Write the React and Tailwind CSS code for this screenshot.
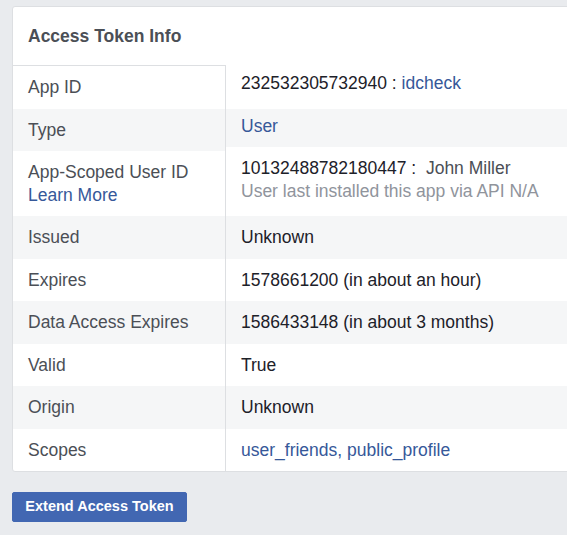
import React from 'react';

const rows = [
    { label: 'App ID', shift: true, value: (<>232532305732940 : <a className="text-[#365899]">idcheck</a></>) },
    { label: 'Type', shift: true, value: <a className="text-[#365899]">User</a> },
    {
        label: (<>App-Scoped User ID<br /><a className="text-[#365899]">Learn More</a></>),
        shift: true,
        value: (
            <>
                {'10132488782180447 :\u00a0 '}<span className="text-[#4b4f56]">John Miller</span>
                <div className="text-[#90949c]">User last installed this app via API N/A</div>
            </>
        )
    },
    { label: 'Issued', value: 'Unknown' },
    { label: 'Expires', value: '1578661200 (in about an hour)' },
    { label: 'Data Access Expires', value: '1586433148 (in about 3 months)' },
    { label: 'Valid', value: 'True' },
    { label: 'Origin', value: 'Unknown' },
    {
        label: 'Scopes',
        value: (
            <span className="text-[#365899]">
                <a>user_friends</a>, <a>public_profile</a>
            </span>
        )
    }
];

const App = () => {
    return (
        <div className="h-[535px] w-full overflow-hidden bg-[#e9ebee] pt-[6px] pl-[12px] font-['Liberation_Sans',Arial,sans-serif]">
            <div className="w-[590px] rounded-[3px] border border-[#dddfe2] bg-white">
                <div className="flex h-[59px] items-center border-b border-[#dddfe2] px-[15px] text-[17.5px] font-bold text-[#4b4f56]">
                    Access Token Info
                </div>

                <div>
                    {rows.map((row, i) => {
                        const gray = i % 2 === 1;
                        return (
                            <div key={i} className={`flex text-[17.5px] leading-[22.5px] ${gray ? 'bg-[#f5f6f7]' : ''}`}>
                                <div className="w-[213px] shrink-0 border-r border-[#dddfe2] px-[15px] py-[10px] text-[#4b4f56]">
                                    {row.label}
                                </div>
                                <div
                                    className={`flex-1 px-[15px] py-[10px] text-[#1d2129] ${row.shift ? '-mt-[4px] mb-[4px]' : ''} ${row.shift && !gray ? 'bg-white' : ''}`}
                                >
                                    {row.value}
                                </div>
                            </div>
                        );
                    })}
                </div>
            </div>

            {/* extend button */}
            <button className="mt-[20px] h-[30px] w-[175px] rounded-[2px] border border-[#4267b2] bg-[#4267b2] text-[14.5px] font-bold text-white">
                Extend Access Token
            </button>
        </div>
    );
};

export default App;
